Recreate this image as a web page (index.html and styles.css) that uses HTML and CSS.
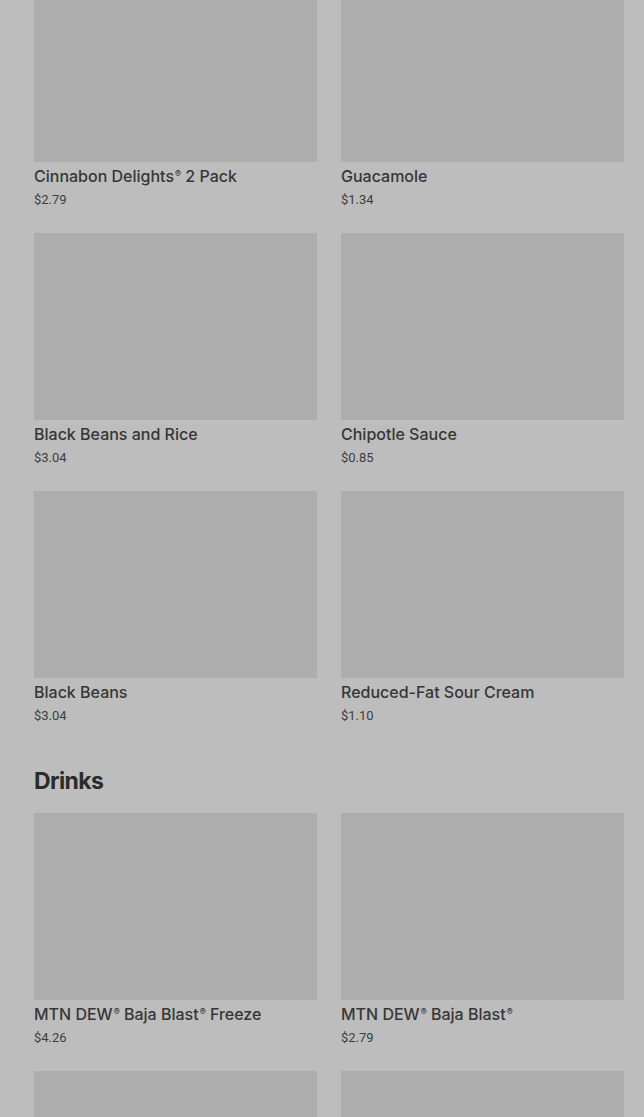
FILE: index.html
```html
<!doctype html>
<html lang="en">
<head>
    <meta charset="UTF-8">
    <meta name="viewport" content="width=device-width, initial-scale=1.0">
    <title>Menu</title>
    <link rel="stylesheet" href="styles.css">
</head>
<body>
    <div class="menu">
        <section class="category first">
            <div class="items">
                <div class="item">
                    <div class="thumb"></div>
                    <div class="name">Cinnabon Delights<span class="reg">&reg;</span> 2 Pack</div>
                    <div class="price">$2.79</div>
                </div>
                <div class="item">
                    <div class="thumb"></div>
                    <div class="name">Guacamole</div>
                    <div class="price">$1.34</div>
                </div>
                <div class="item">
                    <div class="thumb"></div>
                    <div class="name">Black Beans and Rice</div>
                    <div class="price">$3.04</div>
                </div>
                <div class="item">
                    <div class="thumb"></div>
                    <div class="name">Chipotle Sauce</div>
                    <div class="price">$0.85</div>
                </div>
                <div class="item">
                    <div class="thumb"></div>
                    <div class="name">Black Beans</div>
                    <div class="price">$3.04</div>
                </div>
                <div class="item">
                    <div class="thumb"></div>
                    <div class="name">Reduced-Fat Sour Cream</div>
                    <div class="price">$1.10</div>
                </div>
            </div>
        </section>
        <section class="category">
            <h2>Drinks</h2>
            <div class="items">
                <div class="item">
                    <div class="thumb"></div>
                    <div class="name">MTN DEW<span class="reg">&reg;</span> Baja Blast<span class="reg">&reg;</span> Freeze</div>
                    <div class="price">$4.26</div>
                </div>
                <div class="item">
                    <div class="thumb"></div>
                    <div class="name">MTN DEW<span class="reg">&reg;</span> Baja Blast<span class="reg">&reg;</span></div>
                    <div class="price">$2.79</div>
                </div>
                <div class="item">
                    <div class="thumb"></div>
                </div>
                <div class="item">
                    <div class="thumb"></div>
                </div>
            </div>
        </section>
    </div>
</body>
</html>
```

FILE: styles.css
```css
body {
    margin: 0;
    background: #bdbdbd;
    font-family: Inter, Roboto, "Liberation Sans", sans-serif;
    color: #363636;
    height: 1117px;
    overflow: hidden;
}
.menu {
    padding: 0 20px 0 34px;
}
.category.first {
    margin-top: -25px;
}
.category h2 {
    margin: 40px 0 17px;
    font-size: 23px;
    line-height: 30px;
    font-weight: 700;
    letter-spacing: -0.6px;
    color: #2b2b2b;
}
.items {
    display: grid;
    grid-template-columns: 1fr 1fr;
    column-gap: 24px;
    row-gap: 23px;
}
.thumb {
    height: 187px;
    background: #adadad;
}
.name {
    margin-top: 2px;
    font-size: 16px;
    line-height: 24px;
    font-weight: 500;
}
.reg {
    font-size: 9px;
    line-height: 0;
    vertical-align: 5px;
    margin-left: 1px;
}
.price {
    margin-top: 2px;
    font-family: Roboto, "Liberation Sans", sans-serif;
    font-size: 13px;
    line-height: 20px;
    color: #3d3d3d;
}
```
